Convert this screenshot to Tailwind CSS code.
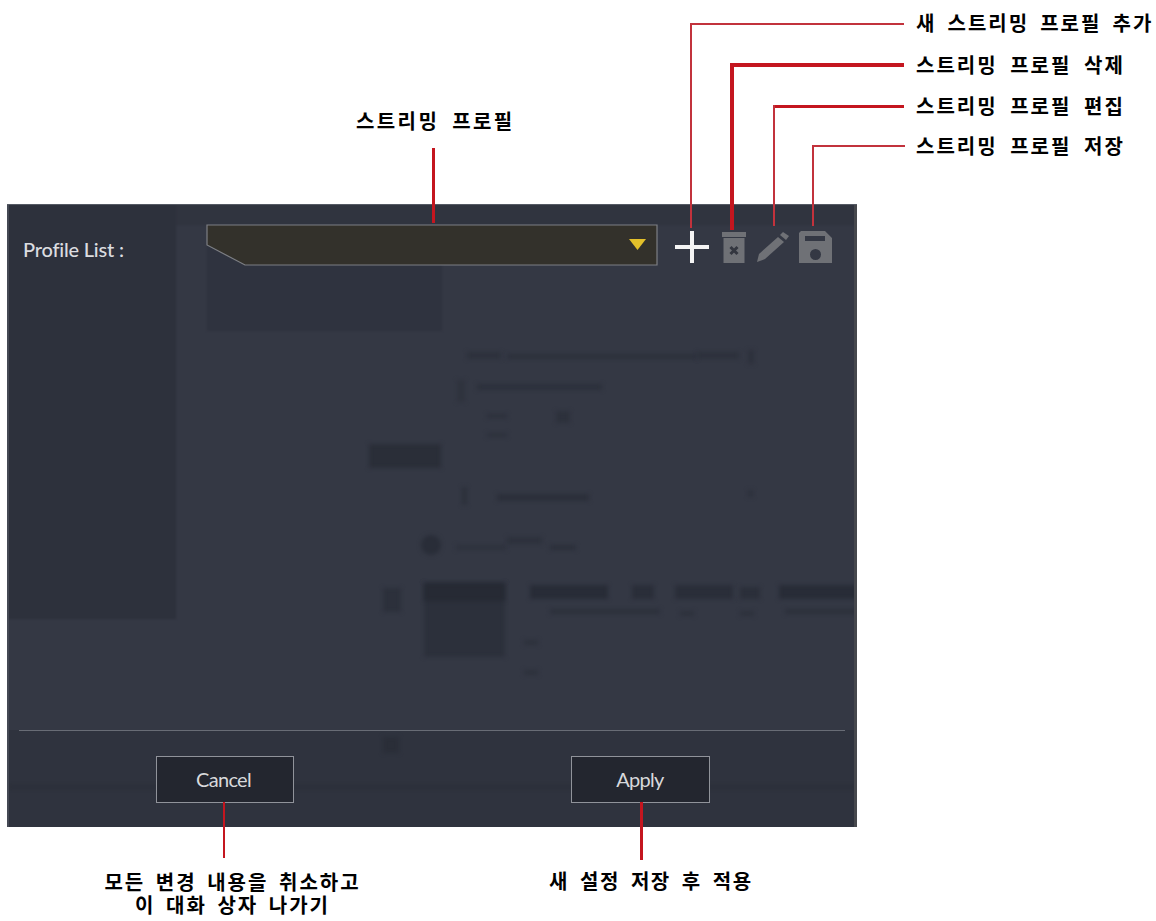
<!DOCTYPE html>
<html lang="ko">
<head>
<meta charset="utf-8">
<script src="https://cdn.jsdelivr.net/npm/@tailwindcss/browser@4"></script>
</head>
<body class="bg-white">
<div class="relative w-[1156px] h-[921px] overflow-hidden bg-white font-['Noto_Sans_CJK_KR','Noto_Sans',sans-serif]">

  <!-- dialog -->
  <div class="absolute left-[7px] top-[204px] w-[850px] h-[623px] bg-[#343844] overflow-hidden flex flex-col border-t border-[#555a64]">
    <!-- blurred page beneath the dialog -->
    <div class="absolute left-0 top-0 w-full h-[20px] bg-[#30343f] blur-[1px]"></div>
    <div class="absolute left-0 top-0 w-[169px] h-[414px] bg-[#2d313c] blur-[1px]"></div>
    <div class="absolute left-[200px] top-[40px] w-[235px] h-[86px] bg-[#2f333f] blur-[1px]"></div>
    <div class="absolute left-[460px] top-[147px] w-[34px] h-[7px] bg-[#2d313c] blur-[2px]"></div>
    <div class="absolute left-[500px] top-[149px] w-[190px] h-[5px] bg-[#2c303b] blur-[2px]"></div>
    <div class="absolute left-[690px] top-[147px] w-[42px] h-[7px] bg-[#2d313c] blur-[2px]"></div>
    <div class="absolute left-[741px] top-[145px] w-[6px] h-[14px] bg-[#2d313c] blur-[2px]"></div>
    <div class="absolute left-[450px] top-[175px] w-[8px] h-[22px] bg-[#2f333e] blur-[2px]"></div>
    <div class="absolute left-[470px] top-[179px] w-[125px] h-[6px] bg-[#2c303b] blur-[2px]"></div>
    <div class="absolute left-[480px] top-[209px] w-[20px] h-[4px] bg-[#2c303b] blur-[2px]"></div>
    <div class="absolute left-[549px] top-[206px] w-[14px] h-[12px] bg-[#2d313c] blur-[2px]"></div>
    <div class="absolute left-[480px] top-[228px] w-[20px] h-[4px] bg-[#2d313c] blur-[2px]"></div>
    <div class="absolute left-[362px] top-[239px] w-[72px] h-[24px] bg-[#2a2e38] blur-[2px]"></div>
    <div class="absolute left-[455px] top-[282px] w-[5px] h-[18px] bg-[#2c303b] blur-[2px]"></div>
    <div class="absolute left-[490px] top-[289px] w-[92px] h-[7px] bg-[#2b2f3a] blur-[2px]"></div>
    <div class="absolute left-[741px] top-[285px] w-[5px] h-[7px] bg-[#2d313c] blur-[2px]"></div>
    <div class="absolute left-[414px] top-[330px] w-[20px] h-[20px] rounded-full bg-[#292d38] blur-[2px]"></div>
    <div class="absolute left-[449px] top-[340px] w-[50px] h-[5px] bg-[#2e323d] blur-[2px]"></div>
    <div class="absolute left-[500px] top-[332px] w-[35px] h-[7px] bg-[#2d313c] blur-[2px]"></div>
    <div class="absolute left-[543px] top-[340px] w-[26px] h-[5px] bg-[#2b2f3a] blur-[2px]"></div>
    <div class="absolute left-[376px] top-[383px] w-[18px] h-[24px] bg-[#2c303b] blur-[2px]"></div>
    <div class="absolute left-[417px] top-[378px] w-[81px] h-[74px] bg-[#2c303b] blur-[2px]"></div>
    <div class="absolute left-[417px] top-[378px] w-[81px] h-[18px] bg-[#262a34] blur-[2px]"></div>
    <div class="absolute left-[523px] top-[380px] w-[78px] h-[14px] bg-[#282c37] blur-[2px]"></div>
    <div class="absolute left-[625px] top-[380px] w-[22px] h-[14px] bg-[#2a2e39] blur-[2px]"></div>
    <div class="absolute left-[668px] top-[380px] w-[58px] h-[14px] bg-[#2a2e39] blur-[2px]"></div>
    <div class="absolute left-[733px] top-[382px] w-[20px] h-[12px] bg-[#2b2f3a] blur-[2px]"></div>
    <div class="absolute left-[772px] top-[380px] w-[78px] h-[14px] bg-[#282c37] blur-[2px]"></div>
    <div class="absolute left-[543px] top-[404px] w-[110px] h-[5px] bg-[#2c303b] blur-[2px]"></div>
    <div class="absolute left-[673px] top-[406px] w-[14px] h-[5px] bg-[#2d313c] blur-[2px]"></div>
    <div class="absolute left-[733px] top-[406px] w-[14px] h-[5px] bg-[#2d313c] blur-[2px]"></div>
    <div class="absolute left-[778px] top-[404px] w-[72px] h-[5px] bg-[#2c303b] blur-[2px]"></div>
    <div class="absolute left-[517px] top-[435px] w-[14px] h-[5px] bg-[#2d313c] blur-[2px]"></div>
    <div class="absolute left-[517px] top-[465px] w-[14px] h-[5px] bg-[#2d313c] blur-[2px]"></div>
    <div class="absolute left-0 top-[525px] w-full h-[98px] bg-[#2f333e]"></div>
    <div class="absolute left-[376px] top-[532px] w-[16px] h-[16px] bg-[#2a2e38] blur-[2px]"></div>
    <div class="absolute left-0 top-[580px] w-full h-[4px] bg-[#2b2f39] blur-[2px]"></div>
    <div class="absolute right-0 top-0 w-[3px] h-full bg-[#46484d]"></div>
    <div class="absolute left-0 top-0 w-[2px] h-full bg-[#454954]"></div>

    <!-- top row -->
    <div class="relative flex items-start h-[525px] pt-[19px]">
      <span class="w-[199px] pl-[16px] pt-[12px] text-[20px] leading-[26px] font-medium tracking-[-0.2px] text-[#dcdde0] font-['Lato',sans-serif]">Profile List :</span>
      <svg class="block w-[452px] h-[42px]" viewBox="0 0 452 42" aria-hidden="true">
        <polygon points="1,1 451,1 451,41 39,41 1,21" fill="#33312b" stroke="#7d7f84" stroke-width="1.2"/>
        <polygon points="423,15 440,15 431.5,26" fill="#e3c02a"/>
      </svg>
      <div class="flex items-center ml-[17px] mt-[7px]">
        <svg class="block w-[34px] h-[32px]" viewBox="0 0 34 32" aria-hidden="true"><path d="M0 16H34M17 0V32" stroke="#f4f4f4" stroke-width="4"/></svg>
        <svg class="block w-[24px] h-[31px] ml-[13px]" viewBox="0 0 24 31" aria-hidden="true"><path d="M0 0H24V5H0ZM1.500 6H22.500V31H1.500Z" fill="#6f7176"/><path d="M8.500 15L15.500 22M15.500 15L8.500 22" stroke="#33363f" stroke-width="3"/></svg>
        <svg class="block w-[32px] h-[30px] ml-[11px]" viewBox="0 0 32 30" aria-hidden="true"><path d="M0 30L2 22L21 5L27 10L8 27Z" fill="#6f7176"/><path d="M23 3L26 0L32 4L29 8Z" fill="#6f7176"/></svg>
        <svg class="block w-[33px] h-[32px] ml-[10px]" viewBox="0 0 33 32" aria-hidden="true"><path fill-rule="evenodd" d="M2 0H26L33 7V32H0V2ZM6 5V10H26V5ZM16.500 18A5.500 5.500 0 1 0 16.500 29A5.500 5.500 0 1 0 16.500 18Z" fill="#6f7176"/></svg>
      </div>
    </div>

    <!-- footer -->
    <div class="relative mx-[12px] h-px bg-[#686c75]"></div>
    <div class="relative flex pt-[25px] pl-[149px] gap-[277px]">
      <button class="w-[138px] h-[47px] pb-[2px] pr-[3px] bg-[#23262f] border border-[#90939a] text-[20px] tracking-[-0.7px] text-[#d8d9dc] font-['Lato',sans-serif]">Cancel</button>
      <button class="w-[139px] h-[47px] pb-[2px] pr-[1px] bg-[#23262f] border border-[#90939a] text-[20px] tracking-[-0.7px] text-[#d8d9dc] font-['Lato',sans-serif]">Apply</button>
    </div>
  </div>

  <!-- callout lines -->
  <div class="absolute left-[690px] top-[23px] w-[214px] h-[2px] bg-[#c2323c]"></div>
  <div class="absolute left-[690px] top-[23px] w-[2px] h-[205px] bg-[#c2323c]"></div>
  <div class="absolute left-[730px] top-[63px] w-[174px] h-[4px] bg-[#c4161f]"></div>
  <div class="absolute left-[730px] top-[63px] w-[4px] h-[167px] bg-[#c4161f]"></div>
  <div class="absolute left-[773px] top-[105px] w-[131px] h-[3px] bg-[#c4161f]"></div>
  <div class="absolute left-[773px] top-[105px] w-[2px] h-[121px] bg-[#c2323c]"></div>
  <div class="absolute left-[812px] top-[145px] w-[93px] h-[2px] bg-[#c2323c]"></div>
  <div class="absolute left-[812px] top-[145px] w-[2px] h-[81px] bg-[#c2323c]"></div>
  <div class="absolute left-[432px] top-[148px] w-[3px] h-[75px] bg-[#c4161f]"></div>
  <div class="absolute left-[223px] top-[802px] w-[2px] h-[56px] bg-[#c4161f]"></div>
  <div class="absolute left-[640px] top-[802px] w-[3px] h-[58px] bg-[#c4161f]"></div>

  <!-- callout labels -->
  <p class="absolute left-[916px] top-[9px] whitespace-nowrap text-[20px] leading-[28px] font-bold tracking-[2px] [word-spacing:3.500px] text-black">새 스트리밍 프로필 추가</p>
  <p class="absolute left-[916px] top-[51px] whitespace-nowrap text-[20px] leading-[28px] font-bold tracking-[2px] [word-spacing:5px] text-black">스트리밍 프로필 삭제</p>
  <p class="absolute left-[916px] top-[92px] whitespace-nowrap text-[20px] leading-[28px] font-bold tracking-[2px] [word-spacing:5px] text-black">스트리밍 프로필 편집</p>
  <p class="absolute left-[916px] top-[132px] whitespace-nowrap text-[20px] leading-[28px] font-bold tracking-[2px] [word-spacing:5px] text-black">스트리밍 프로필 저장</p>
  <p class="absolute left-[356px] top-[107px] whitespace-nowrap text-[20px] leading-[28px] font-bold tracking-[2.400px] [word-spacing:5px] text-black">스트리밍 프로필</p>
  <p class="absolute left-[90px] top-[870px] w-[285px] text-center text-[20px] leading-[23px] font-bold tracking-[2px] [word-spacing:3px] text-black">모든 변경 내용을 취소하고<br>이 대화 상자 나가기</p>
  <p class="absolute left-[549px] top-[869px] whitespace-nowrap text-[20px] leading-[24px] font-bold tracking-[1.500px] [word-spacing:4px] text-black">새 설정 저장 후 적용</p>
</div>
</body>
</html>
